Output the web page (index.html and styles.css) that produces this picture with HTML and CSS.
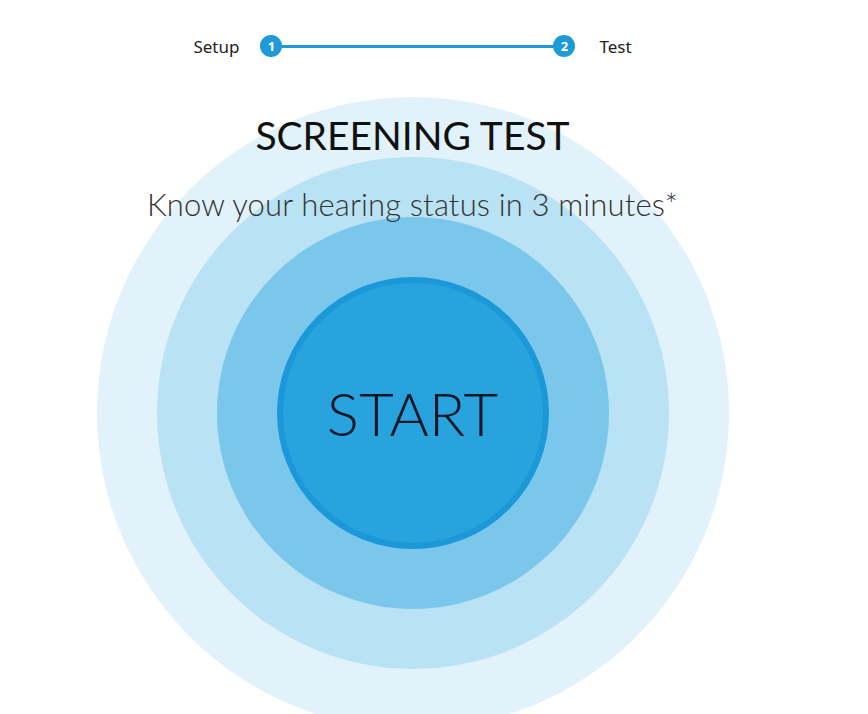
FILE: index.html
```html
<!DOCTYPE html>
<html lang="en">
<head>
  <meta charset="UTF-8">
  <meta name="viewport" content="width=device-width, initial-scale=1.0">
  <title>Screening Test</title>
  <link rel="stylesheet" href="styles.css">
</head>
<body>

  <div class="page">
    <div class="stepper">
      <span class="step-label setup">Setup</span>
      <span class="step-num">1</span>
      <span class="step-line"></span>
      <span class="step-num">2</span>
      <span class="step-label test">Test</span>
    </div>

    <div class="stage">
      <div class="ring ring-1">
        <div class="ring ring-2">
          <div class="ring ring-3">
            <a href="#" class="start-btn">START</a>
          </div>
        </div>
      </div>

      <div class="intro">
        <h1>SCREENING TEST</h1>
        <p>Know your hearing status in 3 minutes*</p>
      </div>
    </div>
  </div>

</body>
</html>
```

FILE: styles.css
```css
* {
  margin: 0;
  padding: 0;
  box-sizing: border-box;
}

body {
  background-color: #fff;
  color: #0d1b2a;
  font-family: 'Lato', 'Noto Sans', sans-serif;
  overflow: hidden;
}

.page {
  width: 825px;
}

/* Stepper */
.stepper {
  height: 92px;
  display: flex;
  justify-content: center;
  align-items: center;
}

.step-label {
  font-family: 'Noto Sans', sans-serif;
  font-size: 17px;
  color: #222;
}

.step-label.setup {
  margin-right: 21px;
}

.step-label.test {
  margin-left: 24px;
}

.step-num {
  width: 22px;
  height: 22px;
  border-radius: 50%;
  background-color: #1e9ad6;
  color: #fff;
  font-family: 'Noto Sans', sans-serif;
  font-size: 13px;
  font-weight: bold;
  display: flex;
  justify-content: center;
  align-items: center;
}

.step-line {
  width: 271px;
  height: 3px;
  background-color: #1e9ad6;
}

/* Rings */
.stage {
  margin-top: 5px;
  display: grid;
  justify-items: center;
}

.ring,
.intro {
  grid-area: 1 / 1;
}

.ring {
  padding: 60px;
  border-radius: 50%;
  display: flex;
  justify-content: center;
  align-items: center;
}

.ring-1 {
  background-color: #e1f2fa;
}

.ring-2 {
  background-color: #b9e2f4;
}

.ring-3 {
  background-color: #7bc7ec;
}

.start-btn {
  width: 272px;
  height: 272px;
  border-radius: 50%;
  border: 6px solid #1a98d8;
  background-color: #29a3de;
  display: flex;
  justify-content: center;
  align-items: center;
  font-size: 60px;
  font-weight: 300;
  color: #0b1626;
  text-decoration: none;
}

.intro {
  align-self: start;
  padding-top: 14px;
  text-align: center;
}

h1 {
  font-size: 39px;
  font-weight: 400;
  line-height: 48px;
  color: #111;
}

p {
  margin-top: 27px;
  font-size: 31px;
  font-weight: 300;
  line-height: 36px;
  letter-spacing: 0.15px;
  color: #333;
}
```
